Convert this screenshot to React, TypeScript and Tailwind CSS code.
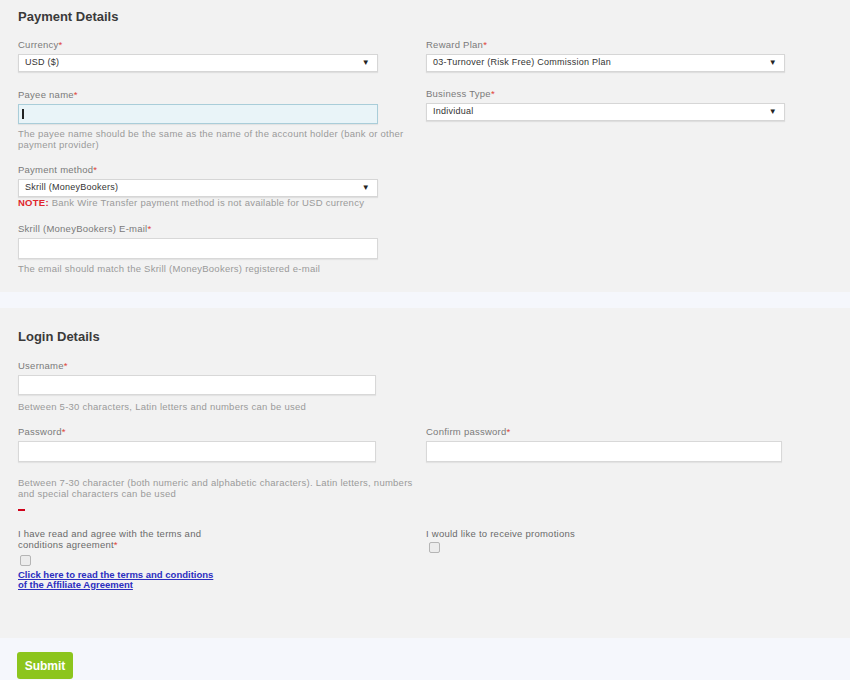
import { ReactNode } from 'react';

const font = { fontFamily: '"Liberation Sans", Arial, sans-serif' };

function Label({ children, required = true }: { children: ReactNode; required?: boolean }) {
  return (
    <div className="h-[12px] text-[9.5px] leading-[12px] text-[#7a7a7a]">
      {children}
      {required && <span className="text-[#e0453a]">*</span>}
    </div>
  );
}

function Select({ value }: { value: string }) {
  return (
    <div className="mt-[3px] flex h-[18px] items-center justify-between border border-[#d6d6d6] bg-white pl-[6px] pr-[7px] text-[9px] text-[#333] shadow-[0_1px_1px_rgba(0,0,0,0.08)]">
      <span>{value}</span>
      <span className="text-[8px] text-[#222]">▼</span>
    </div>
  );
}

function Input({ focused = false, h = 'h-[20px]' }: { focused?: boolean; h?: string }) {
  return (
    <div
      className={`mt-[3px] flex items-center border ${h} ${
        focused ? 'border-[#a9cdd9] bg-[#e9f4f8]' : 'border-[#d8d8d8] bg-white'
      } pl-[3px] shadow-[0_1px_1px_rgba(0,0,0,0.06)]`}
    >
      {focused && <span className="h-[10px] w-[1.5px] bg-[#222]" />}
    </div>
  );
}

function Help({ children, className = '' }: { children: ReactNode; className?: string }) {
  return <div className={`text-[9.5px] leading-[11px] text-[#9a9a9a] ${className}`}>{children}</div>;
}

function Checkbox() {
  return <div className="h-[11px] w-[11px] rounded-[2px] border border-[#b5b5b5] bg-[#ececec]" />;
}

export default function App() {
  return (
    <div className="w-[850px] min-h-[680px] bg-[#f5f7fc] tracking-[0.25px]" style={font}>
      {/* Payment details */}
      <section className="h-[292px] bg-[#f2f2f2] px-[18px] pt-[8px]">
        <h2 className="h-[18px] text-[13px] font-bold leading-[18px] tracking-normal text-[#3a3a3a]">
          Payment Details
        </h2>
        <div className="mt-[13px] flex gap-[48px]">
          <div className="w-[360px]">
            <Label>Currency</Label>
            <Select value="USD ($)" />

            <div className="mt-[17px]">
              <Label>Payee name</Label>
              <Input focused />
              <Help className="mt-[4px] w-[400px]">
                The payee name should be the same as the name of the account holder (bank or other payment provider)
              </Help>
            </div>

            <div className="mt-[14px]">
              <Label>Payment method</Label>
              <Select value="Skrill (MoneyBookers)" />
              <Help className="whitespace-nowrap">
                <span className="font-bold text-[#e0262d]">NOTE:</span> Bank Wire Transfer payment method is not
                available for USD currency
              </Help>
            </div>

            <div className="mt-[15px]">
              <Label>Skrill (MoneyBookers) E-mail</Label>
              <Input h="h-[21px]" />
              <Help className="mt-[4px]">The email should match the Skrill (MoneyBookers) registered e-mail</Help>
            </div>
          </div>

          <div className="w-[359px]">
            <Label>Reward Plan</Label>
            <Select value="03-Turnover (Risk Free) Commission Plan" />

            <div className="mt-[16px]">
              <Label>Business Type</Label>
              <Select value="Individual" />
            </div>
          </div>
        </div>
      </section>

      <div className="h-[16px]" />

      {/* Login details */}
      <section className="h-[330px] bg-[#f2f2f2] px-[18px] pt-[20px]">
        <h2 className="h-[18px] text-[13px] font-bold leading-[18px] tracking-normal text-[#3a3a3a]">
          Login Details
        </h2>

        <div className="mt-[14px] w-[358px]">
          <Label>Username</Label>
          <Input />
          <Help className="mt-[6px]">Between 5-30 characters, Latin letters and numbers can be used</Help>
        </div>

        <div className="mt-[14px] flex gap-[50px]">
          <div className="w-[358px]">
            <Label>Password</Label>
            <Input h="h-[21px]" />
          </div>
          <div className="w-[356px]">
            <Label>Confirm password</Label>
            <Input h="h-[21px]" />
          </div>
        </div>

        <Help className="mt-[15px] w-[405px]">
          Between 7-30 character (both numeric and alphabetic characters). Latin letters, numbers and special
          characters can be used
        </Help>
        <div className="mt-[10px] h-[2px] w-[7px] bg-[#d0021b]" />

        <div className="mt-[17px] flex gap-[50px]">
          <div className="w-[358px]">
            <div className="w-[205px] text-[9.5px] leading-[11px] text-[#6a6a6a]">
              I have read and agree with the terms and conditions agreement
              <span className="text-[#e0453a]">*</span>
            </div>
            <div className="ml-[2px] mt-[5px]">
              <Checkbox />
            </div>
            <a
              href="#"
              className="mt-[4px] block w-[200px] text-[9.5px] font-bold leading-[10px] tracking-normal text-[#2c2ec0] underline"
            >
              Click here to read the terms and conditions of the Affiliate Agreement
            </a>
          </div>
          <div>
            <div className="text-[9.5px] leading-[11px] text-[#6a6a6a]">I would like to receive promotions</div>
            <div className="ml-[3px] mt-[3px]">
              <Checkbox />
            </div>
          </div>
        </div>
      </section>

      <div className="px-[17px] pt-[14px]">
        <button className="h-[27px] w-[56px] rounded-[3px] bg-[#8cc51d] text-[12px] font-bold tracking-normal text-white">
          Submit
        </button>
      </div>
    </div>
  );
}
